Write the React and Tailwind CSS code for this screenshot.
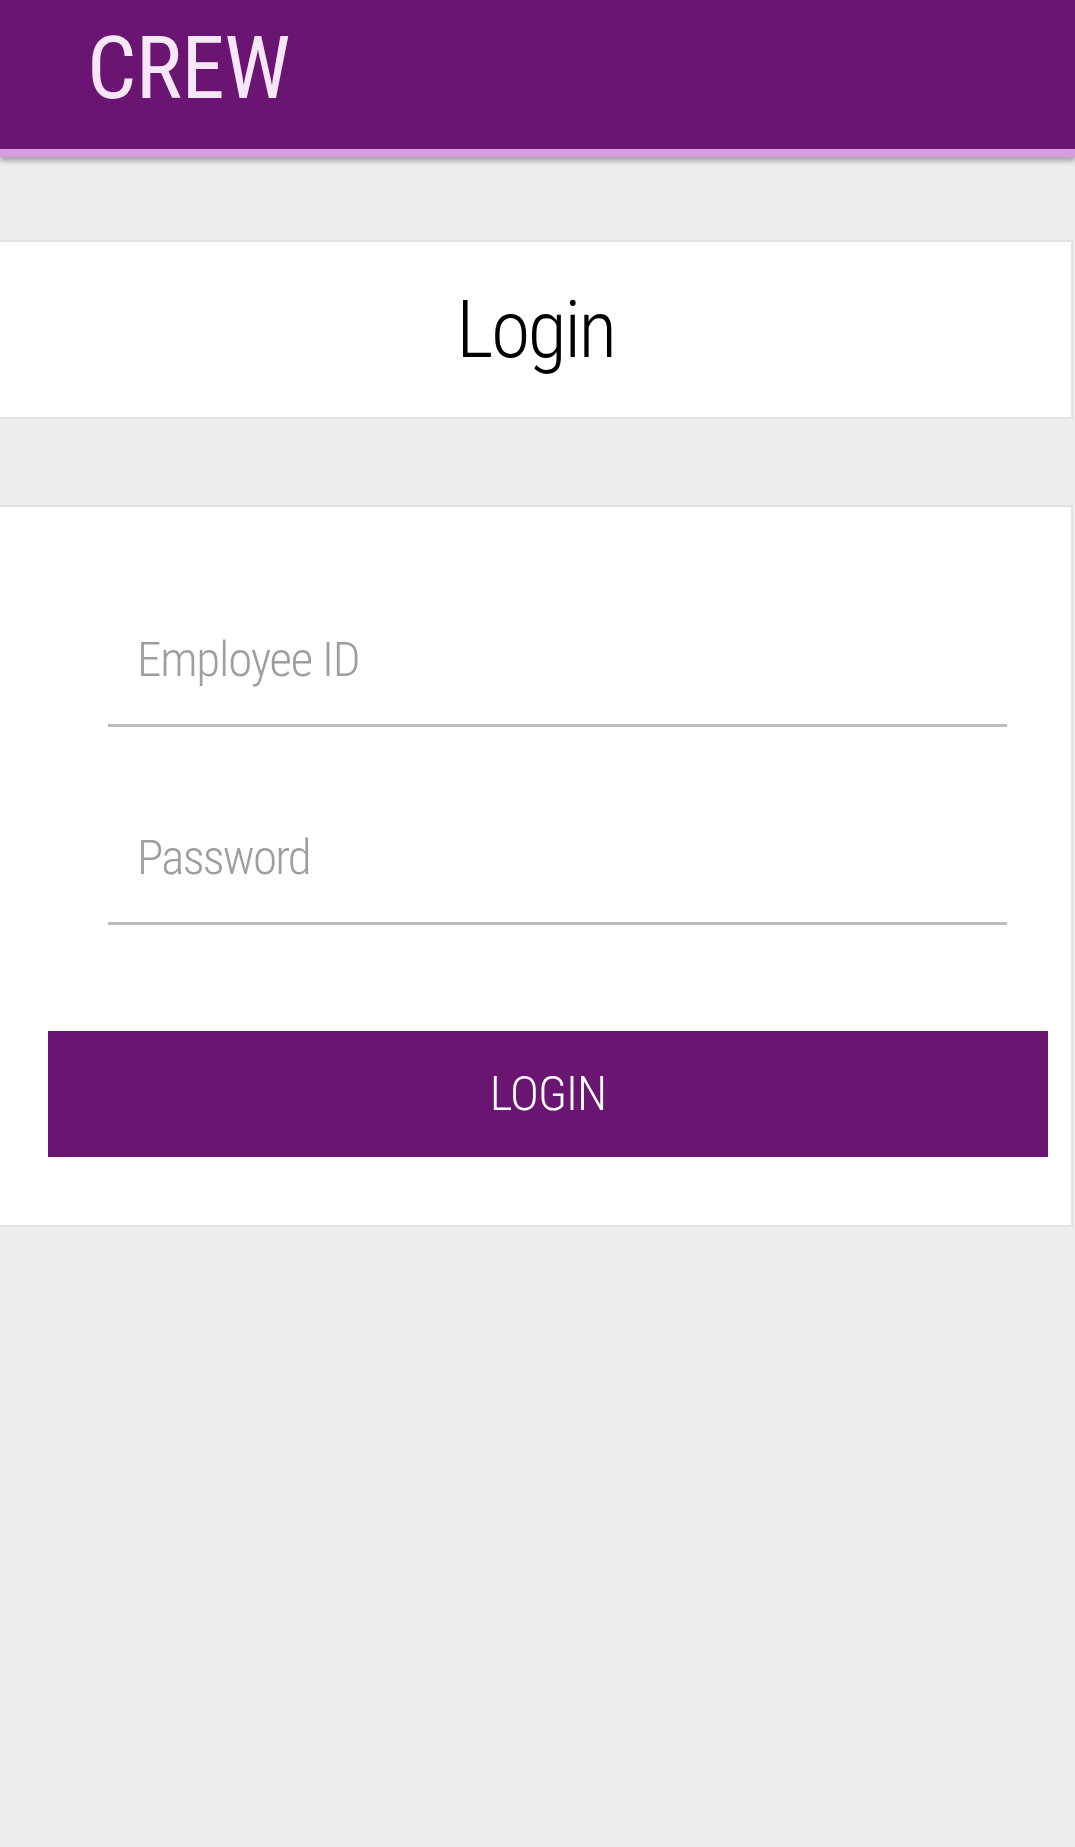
import React from "react";

const font = {
  fontFamily:
    '"Roboto Condensed", "DejaVu Sans Condensed", "Liberation Sans Narrow", Roboto, sans-serif',
};

const App = () => {
  return (
    <div className="min-h-[1847px] w-full bg-[#ededed]" style={font}>
      {/* top bar */}
      <header className="h-[157px] bg-[#6b1573] border-b-[8px] border-[#d69de3] shadow-[0_4px_5px_rgba(0,0,0,0.3)] flex items-start">
        <h1 className="ml-[87px] mt-[18px] text-[87px] leading-[100px] font-normal text-[#f6e7f6] tracking-[-0.5px]">
          CREW
        </h1>
      </header>

      {/* title card */}
      <div className="mt-[83px] ml-[-2px] mr-[2px] h-[179px] bg-white border-2 border-[#e2e2e2] flex items-start justify-center">
        <h2 className="mt-[38px] text-[80px] leading-[100px] font-light text-black tracking-[-2.5px]">
          Login
        </h2>
      </div>

      {/* form card */}
      <form
        className="mt-[86px] ml-[-2px] mr-[2px] bg-white border-2 border-[#e2e2e2] pt-[88px] pb-[68px]"
        onSubmit={(e) => e.preventDefault()}
      >
        <div className="ml-[108px] mr-[64px]">
          <input
            type="text"
            placeholder="Employee ID"
            className="block w-full h-[132px] border-b-[3px] border-[#bdbdbd] pl-[29px] text-[49px] font-light tracking-[-1.2px] text-black placeholder:text-[#9e9e9e] outline-none bg-transparent"
          />
          <input
            type="password"
            placeholder="Password"
            className="block w-full h-[132px] mt-[66px] border-b-[3px] border-[#bdbdbd] pl-[29px] text-[49px] font-light tracking-[-1.8px] text-black placeholder:text-[#9e9e9e] outline-none bg-transparent"
          />
        </div>
        <div className="ml-[48px] mr-[23px] mt-[106px]">
          <button
            type="submit"
            className="w-full h-[126px] bg-[#6b1573] text-white text-[49px] font-light uppercase tracking-[-1px] flex items-center justify-center"
          >
            Login
          </button>
        </div>
      </form>
    </div>
  );
};

export default App;
